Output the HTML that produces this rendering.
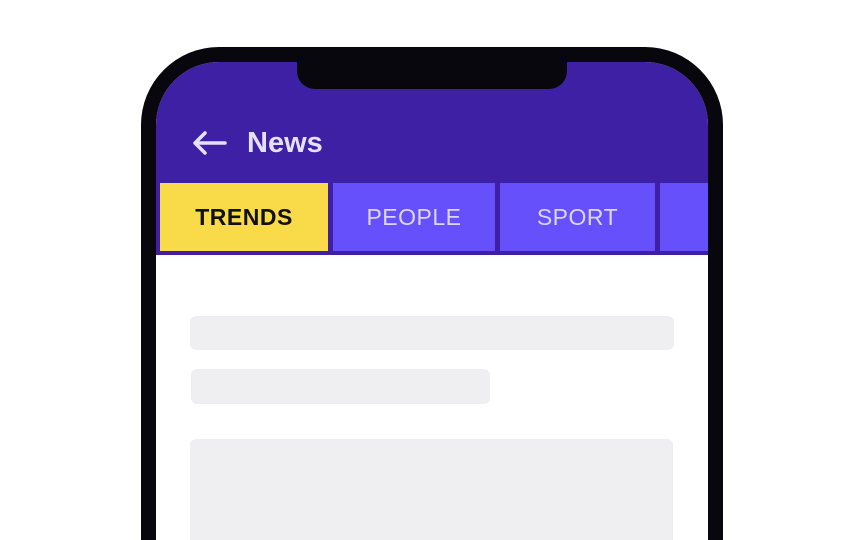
<!DOCTYPE html>
<html style="width:864px;height:540px;overflow:hidden"><head><style>
*{margin:0;padding:0;box-sizing:border-box}
body{width:864px;height:540px;background:#fff;position:relative;overflow:hidden;font-family:"Liberation Sans",sans-serif}
.phone{position:absolute;left:141px;top:47px;width:582px;height:493px;background:#07070d;border-radius:78px 78px 0 0}
.screen{position:absolute;left:156px;top:62px;width:552px;height:478px;background:#fff;border-radius:63px 63px 0 0;overflow:hidden}
.hdr{position:absolute;left:0;top:0;width:552px;height:193px;background:#3d20a3}
.notch{position:absolute;left:141px;top:-10px;width:270px;height:37px;background:#07070d;border-radius:0 0 18px 18px}
.title{position:absolute;left:91px;top:65px;color:#e6e0fa;font-weight:bold;font-size:29px}
.arrow{position:absolute;left:36px;top:68px}
.tab{position:absolute;top:121px;height:68px;background:#6650fb;color:#dcd6fb;font-size:23px;letter-spacing:0.5px;display:flex;align-items:center;justify-content:center}
.sk{position:absolute;background:#efeff1;border-radius:6px}
</style></head><body>
<div class="phone"></div>
<div class="screen">
<div class="hdr"></div>
<div class="notch"></div>
<svg class="arrow" width="36" height="26" viewBox="0 0 36 26"><path d="M3 13H33M13 3L3 13L13 23" fill="none" stroke="#e6e0fa" stroke-width="3.5" stroke-linecap="round" stroke-linejoin="round"/></svg>
<div class="title">News</div>
<div class="tab" style="left:4px;width:168px;background:#f9db4a;color:#111;font-weight:bold">TRENDS</div>
<div class="tab" style="left:177px;width:162px">PEOPLE</div>
<div class="tab" style="left:344px;width:155px">SPORT</div>
<div class="tab" style="left:504px;width:48px"></div>
<div class="sk" style="left:34px;top:254px;width:484px;height:34px"></div>
<div class="sk" style="left:35px;top:307px;width:299px;height:35px"></div>
<div class="sk" style="left:34px;top:377px;width:483px;height:101px;border-radius:6px 6px 0 0"></div>
</div>
</body></html>
